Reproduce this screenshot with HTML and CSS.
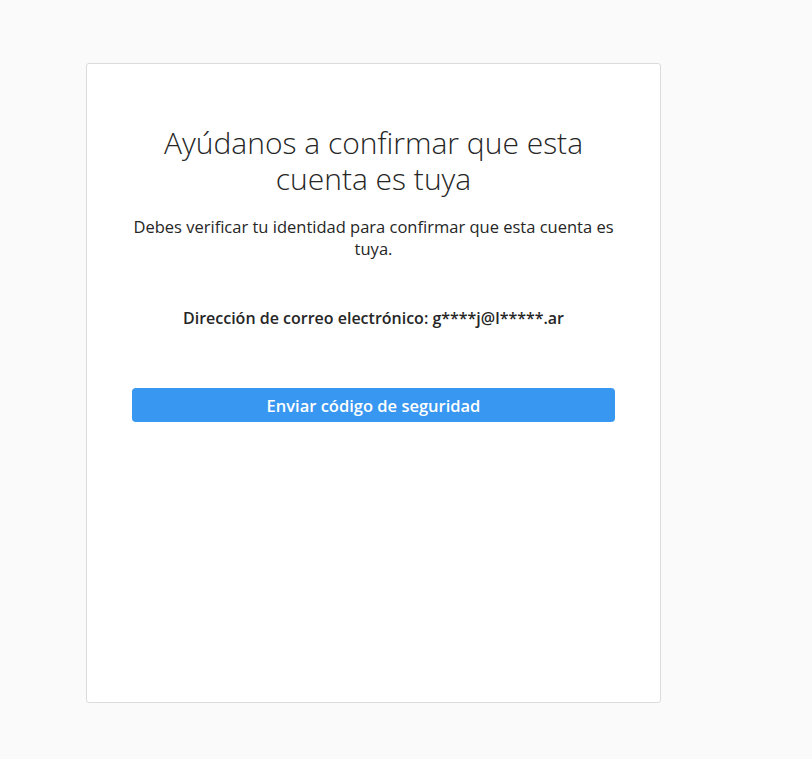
FILE: index.html
```html
<!DOCTYPE html>
<html lang="es">
<head>
<meta charset="utf-8">
<title>Confirmar cuenta</title>
<link rel="stylesheet" href="styles.css">
</head>
<body>
<main class="page">
  <section class="card">
    <h1 class="title">Ayúdanos a confirmar que esta cuenta es tuya</h1>
    <p class="lead">Debes verificar tu identidad para confirmar que esta cuenta es tuya.</p>
    <p class="email">Dirección de correo electrónico: g****j@l*****.ar</p>
    <button class="btn" type="button">Enviar código de seguridad</button>
  </section>
</main>
</body>
</html>
```

FILE: styles.css
```css
html, body {
  margin: 0;
  padding: 0;
  background: #fafafa;
  font-family: "Open Sans", "Noto Sans", "Liberation Sans", sans-serif;
  color: #262626;
}

.page {
  padding: 63px 0 0 86px;
}

.card {
  box-sizing: border-box;
  width: 575px;
  height: 640px;
  background: #ffffff;
  border: 1px solid #dbdbdb;
  border-radius: 3px;
  padding: 61px 45px 0 45px;
  display: flex;
  flex-direction: column;
  align-items: center;
  text-align: center;
}

.title {
  margin: 0;
  font-weight: 300;
  font-size: 30px;
  line-height: 36px;
  width: 440px;
}

.lead {
  margin: 19px 0 0;
  font-size: 16.5px;
  line-height: 22px;
}

.email {
  margin: 47px 0 0;
  font-size: 16px;
  font-weight: 600;
  line-height: 22px;
}

.btn {
  margin-top: 59px;
  width: 100%;
  height: 34px;
  border: none;
  border-radius: 4px;
  background: #3897f0;
  color: #ffffff;
  font-family: inherit;
  font-weight: 600;
  font-size: 16.5px;
}
```
